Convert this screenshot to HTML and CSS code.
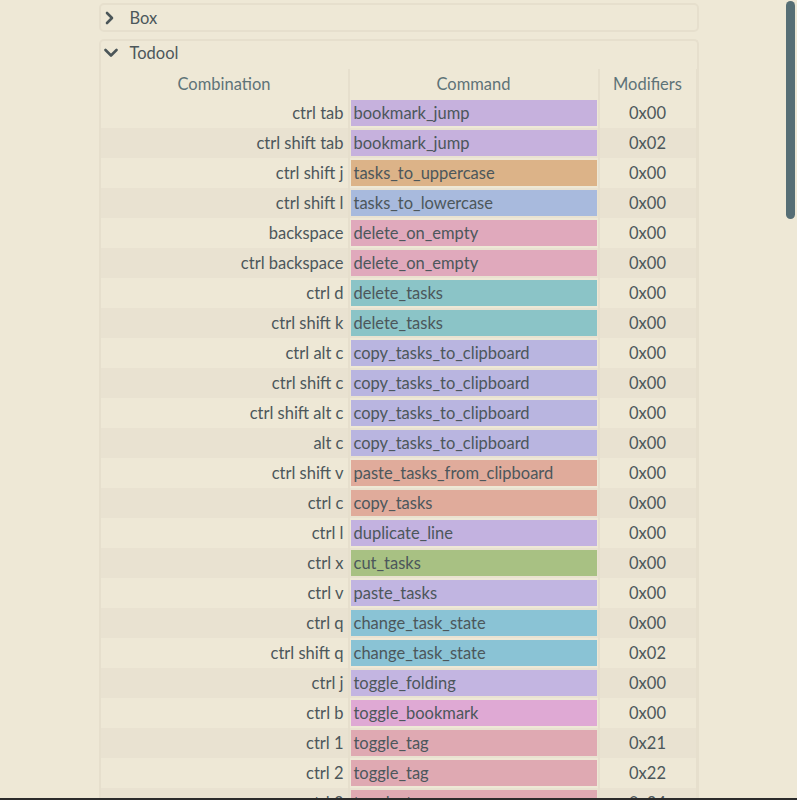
FILE: index.html
```html
<!DOCTYPE html>
<html>
<head>
<meta charset="utf-8">
<link rel="stylesheet" href="styles.css">
</head>
<body>
<div class="page">
  <div class="section section-box">
    <div class="section-head head-closed">
      <svg class="chev" width="12" height="14" viewBox="0 0 12 14"><polyline points="3,2 8,7 3,12" fill="none" stroke="#4b5659" stroke-width="2.6" stroke-linecap="round" stroke-linejoin="round"/></svg>
      <span class="title">Box</span>
    </div>
  </div>
  <div class="section section-todool">
    <div class="section-head head-open">
      <svg class="chev" width="14" height="12" viewBox="0 0 14 12"><polyline points="1.5,3 7,8.5 12.5,3" fill="none" stroke="#4b5659" stroke-width="2.6" stroke-linecap="round" stroke-linejoin="round"/></svg>
      <span class="title">Todool</span>
    </div>
    <div class="table">
      <div class="row head">
        <div class="c1">Combination</div>
        <div class="c2">Command</div>
        <div class="c3">Modifiers</div>
      </div>
      <div class="row"><div class="c1">ctrl tab</div><div class="c2"><span class="cmd k-bookmark">bookmark_jump</span></div><div class="c3">0x00</div></div>
      <div class="row"><div class="c1">ctrl shift tab</div><div class="c2"><span class="cmd k-bookmark">bookmark_jump</span></div><div class="c3">0x02</div></div>
      <div class="row"><div class="c1">ctrl shift j</div><div class="c2"><span class="cmd k-upper">tasks_to_uppercase</span></div><div class="c3">0x00</div></div>
      <div class="row"><div class="c1">ctrl shift l</div><div class="c2"><span class="cmd k-lower">tasks_to_lowercase</span></div><div class="c3">0x00</div></div>
      <div class="row"><div class="c1">backspace</div><div class="c2"><span class="cmd k-delempty">delete_on_empty</span></div><div class="c3">0x00</div></div>
      <div class="row"><div class="c1">ctrl backspace</div><div class="c2"><span class="cmd k-delempty">delete_on_empty</span></div><div class="c3">0x00</div></div>
      <div class="row"><div class="c1">ctrl d</div><div class="c2"><span class="cmd k-delete">delete_tasks</span></div><div class="c3">0x00</div></div>
      <div class="row"><div class="c1">ctrl shift k</div><div class="c2"><span class="cmd k-delete">delete_tasks</span></div><div class="c3">0x00</div></div>
      <div class="row"><div class="c1">ctrl alt c</div><div class="c2"><span class="cmd k-clip">copy_tasks_to_clipboard</span></div><div class="c3">0x00</div></div>
      <div class="row"><div class="c1">ctrl shift c</div><div class="c2"><span class="cmd k-clip">copy_tasks_to_clipboard</span></div><div class="c3">0x00</div></div>
      <div class="row"><div class="c1">ctrl shift alt c</div><div class="c2"><span class="cmd k-clip">copy_tasks_to_clipboard</span></div><div class="c3">0x00</div></div>
      <div class="row"><div class="c1">alt c</div><div class="c2"><span class="cmd k-clip">copy_tasks_to_clipboard</span></div><div class="c3">0x00</div></div>
      <div class="row"><div class="c1">ctrl shift v</div><div class="c2"><span class="cmd k-paste">paste_tasks_from_clipboard</span></div><div class="c3">0x00</div></div>
      <div class="row"><div class="c1">ctrl c</div><div class="c2"><span class="cmd k-paste">copy_tasks</span></div><div class="c3">0x00</div></div>
      <div class="row"><div class="c1">ctrl l</div><div class="c2"><span class="cmd k-dup">duplicate_line</span></div><div class="c3">0x00</div></div>
      <div class="row"><div class="c1">ctrl x</div><div class="c2"><span class="cmd k-cut">cut_tasks</span></div><div class="c3">0x00</div></div>
      <div class="row"><div class="c1">ctrl v</div><div class="c2"><span class="cmd k-pastet">paste_tasks</span></div><div class="c3">0x00</div></div>
      <div class="row"><div class="c1">ctrl q</div><div class="c2"><span class="cmd k-state">change_task_state</span></div><div class="c3">0x00</div></div>
      <div class="row"><div class="c1">ctrl shift q</div><div class="c2"><span class="cmd k-state">change_task_state</span></div><div class="c3">0x02</div></div>
      <div class="row"><div class="c1">ctrl j</div><div class="c2"><span class="cmd k-fold">toggle_folding</span></div><div class="c3">0x00</div></div>
      <div class="row"><div class="c1">ctrl b</div><div class="c2"><span class="cmd k-bm">toggle_bookmark</span></div><div class="c3">0x00</div></div>
      <div class="row"><div class="c1">ctrl 1</div><div class="c2"><span class="cmd k-tag">toggle_tag</span></div><div class="c3">0x21</div></div>
      <div class="row"><div class="c1">ctrl 2</div><div class="c2"><span class="cmd k-tag">toggle_tag</span></div><div class="c3">0x22</div></div>
      <div class="row"><div class="c1">ctrl 3</div><div class="c2"><span class="cmd k-tag">toggle_tag</span></div><div class="c3">0x24</div></div>
    </div>
  </div>
</div>
<div class="scrollbar"></div>
<div class="bottom-edge"></div>
</body>
</html>
```

FILE: styles.css
```css
html, body {
  margin: 0;
  padding: 0;
  height: 800px;
  overflow: hidden;
}
body {
  background: #eee8d6;
  font-family: Lato, "Noto Sans", sans-serif;
  font-size: 16.5px;
  color: #4c575b;
}
.page {
  width: 600px;
  margin: 0 auto;
  padding-top: 3px;
}
.section {
  border: 2px solid #e6dfcd;
  border-radius: 5px;
}
.section-box {
  margin-bottom: 7px;
}
.section-todool {
  border-bottom: none;
  border-bottom-left-radius: 0;
  border-bottom-right-radius: 0;
}
.section-head {
  display: flex;
  align-items: center;
  padding-left: 3px;
}
.head-closed {
  height: 24px;
  padding-top: 1px;
}
.section-head .chev {
  margin-right: 14px;
}
.head-open {
  height: 24px;
  padding-bottom: 4px;
}
.head-open .chev {
  margin-right: 12px;
}
.title {
  line-height: 1;
}
.table {
  display: flex;
  flex-direction: column;
}
.row {
  display: grid;
  grid-template-columns: 247px 250px 99px;
  height: 30px;
}
.row:nth-child(odd) {
  background: #e9e2d1;
}
.row.head {
  height: 29px;
  background: transparent;
  color: #5e7378;
}
.row > div {
  display: flex;
  align-items: center;
  box-sizing: border-box;
}
.c1 {
  justify-content: flex-end;
  padding-right: 4px;
}
.head .c1, .head .c2, .head .c3 {
  justify-content: center;
}
.head .c1 {
  padding-right: 0;
}
.c2 {
  border-left: 2px solid #e6dfcd;
  padding: 2px 1px 2px 1px;
  align-items: stretch !important;
}
.head .c2 {
  align-items: center !important;
  padding: 0;
}
.c3 {
  border-left: 2px solid #e6dfcd;
  border-right: 1px solid #e6dfcd;
  justify-content: center;
}
.cmd {
  flex: 1;
  display: flex;
  align-items: center;
  padding-left: 3px;
}
.k-bookmark { background: #c6b1dd; }
.k-upper { background: #dcb388; }
.k-lower { background: #a8badd; }
.k-delempty { background: #e0a9bc; }
.k-delete { background: #8bc4c7; }
.k-clip { background: #b9b5e0; }
.k-paste { background: #e0ab9b; }
.k-dup { background: #c3b2e0; }
.k-cut { background: #a8c183; }
.k-pastet { background: #c1b5e1; }
.k-state { background: #8ac3d5; }
.k-fold { background: #c3b5e1; }
.k-bm { background: #dfa9d4; }
.k-tag { background: #dfa9b2; }
.scrollbar {
  position: fixed;
  top: 1px;
  right: 2px;
  width: 9px;
  height: 218px;
  border-radius: 5px;
  background: #566e75;
}
.bottom-edge {
  position: fixed;
  left: 0;
  right: 0;
  bottom: 0;
  height: 2px;
  background: #2b2b2b;
}
```
